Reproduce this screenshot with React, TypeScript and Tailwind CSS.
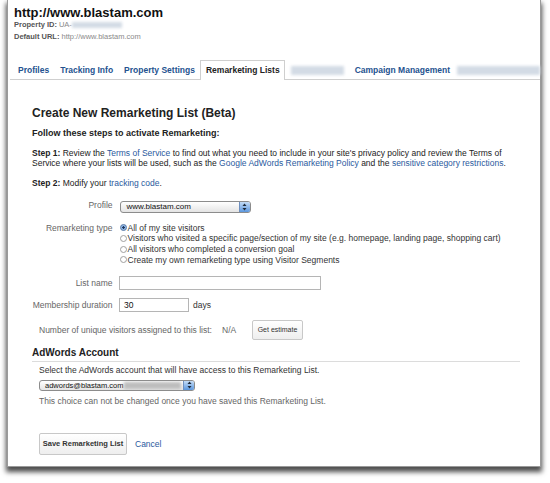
function Arrows() {
  return (
    <svg width="5" height="8" viewBox="0 0 5 8" className="block">
      <path d="M2.5 0.5 L4.5 3 L0.5 3 Z" fill="#1d2a3a" />
      <path d="M2.5 7.5 L4.5 5 L0.5 5 Z" fill="#1d2a3a" />
    </svg>
  );
}

function Radio({ checked }: { checked?: boolean }) {
  if (checked) {
    return (
      <span className="inline-block h-[7px] w-[7px] shrink-0 rounded-full border border-[#4f74a6] bg-[radial-gradient(circle,#1c355c_0,#1c355c_28%,#7fa9de_40%,#c7dcf4_100%)]" />
    );
  }
  return <span className="inline-block h-[7px] w-[7px] shrink-0 rounded-full border border-[#a0a0a0] bg-white" />;
}

function BlurBox({ className }: { className: string }) {
  return <div className={`bg-[#d3dbe5] blur-[1.5px] ${className}`} />;
}

export default function App() {
  return (
    <div className="h-[483px] w-[550px] overflow-hidden bg-white font-['Liberation_Sans',Arial,sans-serif]">
      <div className="ml-[7px] h-[467px] w-[534px] border-x border-b border-[#9a9a9a] bg-white shadow-[0_4px_5px_1px_rgba(0,0,0,0.7)]">
        {/* property header */}
        <div className="pl-[6px] pt-[5px]">
          <div className="text-[13px] font-bold leading-[16px] text-[#111]">http://www.blastam.com</div>
          <div className="-mt-[2px] flex items-center text-[7.5px] leading-[12px] text-[#8a8a8a]">
            <span className="font-bold text-[#555]">Property ID:</span>
            <span className="ml-[2px]">UA-</span>
            <BlurBox className="h-[6px] w-[50px]" />
          </div>
          <div className="text-[7.5px] leading-[12px] text-[#8a8a8a]">
            <span className="font-bold text-[#555]">Default URL:</span> http://www.blastam.com
          </div>
        </div>

        {/* tabs */}
        <div className="ml-[2px] mt-[17px] flex items-end border-b border-[#cfcfcf] pl-[2.5px] text-[8.5px] font-bold leading-[18px] text-[#24528f]">
          <div className="border border-b-0 border-transparent px-[4.5px]">Profiles</div>
          <div className="border border-b-0 border-transparent px-[4.5px]">Tracking Info</div>
          <div className="border border-b-0 border-transparent px-[4.5px]">Property Settings</div>
          <div className="-mb-px border border-b-0 border-[#cfcfcf] bg-white px-[4.5px] pb-px text-[#222]">Remarketing Lists</div>
          <div className="flex h-[18px] items-center border border-b-0 border-transparent px-[4.5px]">
            <BlurBox className="h-[9px] w-[53px]" />
          </div>
          <div className="border border-b-0 border-transparent px-[4.5px]">Campaign Management</div>
          <div className="flex h-[18px] flex-1 items-center pl-[1px]">
            <BlurBox className="h-[9px] w-full" />
          </div>
        </div>

        {/* form */}
        <div className="pl-[24px] text-[8.5px] text-[#222]">
          <h2 className="mt-[26px] text-[12px] font-bold leading-[14px] text-[#222]">Create New Remarketing List (Beta)</h2>
          <div className="mt-[7.5px] text-[9px] font-bold leading-[11px]">Follow these steps to activate Remarketing:</div>
          <div className="mt-[9px] leading-[10px]">
            <span className="font-bold">Step 1:</span> Review the <a className="text-[#2a5a9e]">Terms of Service</a> to find out what you need to include in your site's privacy policy and review the Terms of
            <br />
            Service where your lists will be used, such as the <a className="text-[#2a5a9e]">Google AdWords Remarketing Policy</a> and the{" "}
            <a className="text-[#2a5a9e]">sensitive category restrictions</a>.
          </div>
          <div className="mt-[10px] leading-[10px]">
            <span className="font-bold">Step 2:</span> Modify your <a className="text-[#2a5a9e]">tracking code</a>.
          </div>

          {/* profile */}
          <div className="mt-[12px] flex items-start">
            <div className="w-[80.5px] text-right leading-[10px] text-[#666]">Profile</div>
            <div className="ml-[7px] mt-[1px] flex h-[12px] w-[131px] items-stretch overflow-hidden rounded-[3px] border border-[#8c8c8c] bg-linear-to-b from-white to-[#e4e4e4]">
              <span className="flex-1 pl-[6px] text-[8px] leading-[10px] text-[#111]">www.blastam.com</span>
              <span className="flex w-[11px] items-center justify-center border-l border-[#6d8fbf] bg-linear-to-b from-[#c4dcf6] to-[#5b97de]">
                <Arrows />
              </span>
            </div>
          </div>

          {/* remarketing type */}
          <div className="mt-[10px] flex items-start">
            <div className="w-[80.5px] text-right leading-[10.7px] text-[#666]">Remarketing type</div>
            <div className="ml-[7px] leading-[10.7px] text-[#333]">
              <div className="flex items-center gap-[1px]">
                <Radio checked />
                All of my site visitors
              </div>
              <div className="flex items-center gap-[1px]">
                <Radio />
                Visitors who visited a specific page/section of my site (e.g. homepage, landing page, shopping cart)
              </div>
              <div className="flex items-center gap-[1px]">
                <Radio />
                All visitors who completed a conversion goal
              </div>
              <div className="flex items-center gap-[1px]">
                <Radio />
                Create my own remarketing type using Visitor Segments
              </div>
            </div>
          </div>

          {/* list name */}
          <div className="mt-[11px] flex items-center">
            <div className="w-[80.5px] text-right leading-[10px] text-[#666]">List name</div>
            <div className="ml-[6.5px] h-[14px] w-[202px] border border-[#b5b5b5] bg-white" />
          </div>

          {/* membership */}
          <div className="mt-[8px] flex items-center">
            <div className="w-[80.5px] text-right leading-[10px] text-[#666]">Membership duration</div>
            <div className="ml-[6.5px] h-[14px] w-[70px] border border-[#b5b5b5] bg-white pl-[4px] text-[8.5px] leading-[12px] text-[#111]">30</div>
            <span className="ml-[4px] leading-[10px] text-[#333]">days</span>
          </div>

          {/* estimate */}
          <div className="mt-[8px] flex items-center pl-[7px] text-[#666]">
            <span className="w-[183px] leading-[10px]">Number of unique visitors assigned to this list:</span>
            <span className="w-[30px] leading-[10px]">N/A</span>
            <button className="h-[20px] w-[51px] rounded-[2px] border border-[#c8c8c8] bg-linear-to-b from-white to-[#eeeeee] text-[7px] text-[#333]">
              Get estimate
            </button>
          </div>

          {/* adwords account */}
          <div className="mt-[7px] w-[488px] border-b border-[#dcdcdc] pb-[1.5px] text-[10px] font-bold leading-[12px] text-[#222]">
            AdWords Account
          </div>
          <div className="pl-[7px]">
            <div className="mt-[3px] leading-[10px] text-[#333]">Select the AdWords account that will have access to this Remarketing List.</div>
            <div className="mt-[5px] flex h-[11px] w-[156px] items-stretch overflow-hidden rounded-[3px] border border-[#8c8c8c] bg-linear-to-b from-white to-[#e4e4e4]">
              <span className="pl-[5px] text-[7.5px] leading-[9px] text-[#111]">adwords@blastam.com</span>
              <span className="flex flex-1 items-center pl-[1px] pr-[2px]">
                <span className="h-[7px] w-full bg-[#bdbdbd] blur-[1.5px]" />
              </span>
              <span className="flex w-[11px] items-center justify-center border-l border-[#6d8fbf] bg-linear-to-b from-[#c4dcf6] to-[#5b97de]">
                <Arrows />
              </span>
            </div>
            <div className="mt-[5.5px] leading-[10px] text-[#666]">This choice can not be changed once you have saved this Remarketing List.</div>
            <div className="mt-[26.5px] flex items-center">
              <button className="h-[22px] w-[88px] rounded-[2px] border border-[#c8c8c8] bg-linear-to-b from-white to-[#eeeeee] text-[7.5px] font-bold text-[#333]">
                Save Remarketing List
              </button>
              <a className="ml-[8px] leading-[10px] text-[#2a5a9e]">Cancel</a>
            </div>
          </div>
        </div>
      </div>
    </div>
  );
}
